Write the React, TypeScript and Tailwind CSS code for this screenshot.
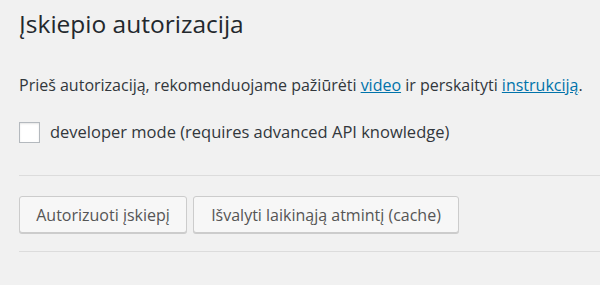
export default function App() {
  return (
    <div
      className="min-h-[285px] w-[600px] overflow-hidden bg-[#f1f1f1] pl-[19px] text-[#32373c]"
      style={{ fontFamily: '"Open Sans", "Noto Sans", sans-serif' }}
    >
      <h1 className="pt-[7px] text-[24.5px] leading-[34px] font-normal text-[#23282d]">
        Įskiepio autorizacija
      </h1>
      <p className="mt-[32px] text-[16px] leading-[24px] whitespace-nowrap">
        Prieš autorizaciją, rekomenduojame pažiūrėti{' '}
        <a href="#" className="text-[#0073aa] underline">
          video
        </a>{' '}
        ir perskaityti{' '}
        <a href="#" className="text-[#0073aa] underline">
          instrukciją
        </a>
        .
      </p>
      <label className="mt-[24px] flex h-[22px] items-center gap-[10px] text-[16.5px] leading-[22px] whitespace-nowrap">
        <span className="h-[21px] w-[21px] shrink-0 border border-[#b4b9be] bg-white shadow-[inset_0_1px_2px_rgba(0,0,0,0.1)]" />
        developer mode (requires advanced API knowledge)
      </label>
      <hr className="mt-[32px] border-0 border-t border-[#dcdcdc]" />
      <div className="mt-[20px] flex gap-[6px]">
        <button className="h-[37px] w-[168px] rounded-[3px] border border-[#cccccc] bg-[#f7f7f7] text-[16px] text-[#555] shadow-[0_1px_0_#cccccc]">
          Autorizuoti įskiepį
        </button>
        <button className="h-[37px] w-[266px] rounded-[3px] border border-[#cccccc] bg-[#f7f7f7] text-[16px] text-[#555] shadow-[0_1px_0_#cccccc]">
          Išvalyti laikinąją atmintį (cache)
        </button>
      </div>
      <hr className="mt-[18px] border-0 border-t border-[#dcdcdc]" />
    </div>
  );
}
